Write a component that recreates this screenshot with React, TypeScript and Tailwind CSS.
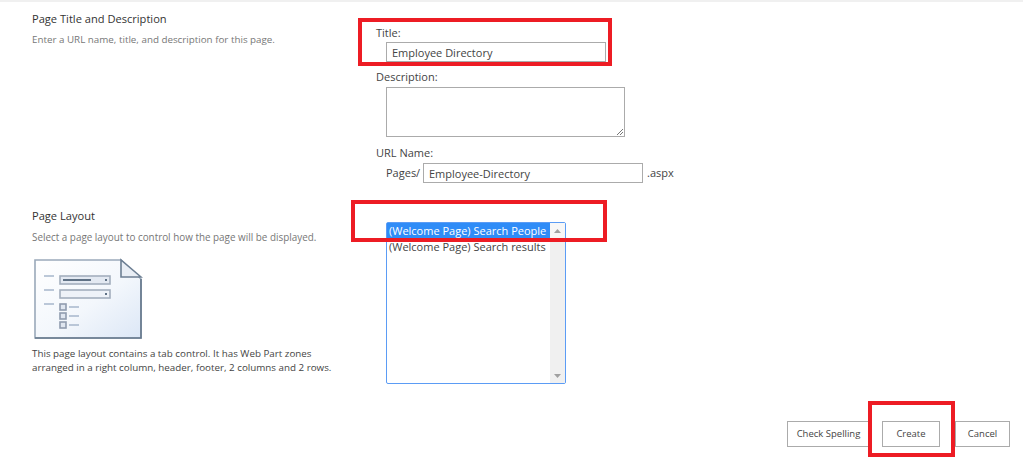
function LayoutPreview() {
  return (
    <svg width="110" height="84" viewBox="0 0 110 84" className="block">
      <defs>
        <linearGradient id="sheet" x1="0" y1="0" x2="1" y2="1">
          <stop offset="0" stopColor="#ffffff" />
          <stop offset="0.55" stopColor="#f3f7fc" />
          <stop offset="1" stopColor="#dce7f6" />
        </linearGradient>
      </defs>
      <path d="M2 2H88L108 21V80H2Z" fill="url(#sheet)" stroke="#9aa9ba" strokeWidth="1.6" />
      <path d="M2 80H108V21" fill="none" stroke="#66788c" strokeWidth="1.6" />
      <path d="M88 2V19H108Z" fill="#e9eef5" stroke="#6d7f93" strokeWidth="1.6" />
      <path d="M11 18H21M11 32H21M11 46H21" stroke="#a6b6cc" strokeWidth="1.6" />
      <rect x="27" y="18" width="50" height="8" fill="#e3e9f2" stroke="#a3aebd" strokeWidth="1.6" />
      <rect x="30" y="21" width="28" height="2" fill="#5f7185" />
      <rect x="27" y="32" width="50" height="8" fill="#eef2f8" stroke="#a3aebd" strokeWidth="1.6" />
      <rect x="72" y="21" width="2" height="2" fill="#5f7185" />
      <rect x="72" y="35" width="2" height="2" fill="#5f7185" />
      <rect x="27" y="46" width="6" height="6" fill="#dfe6f0" stroke="#8f9cae" strokeWidth="1.6" />
      <rect x="27" y="55" width="6" height="6" fill="#dfe6f0" stroke="#8f9cae" strokeWidth="1.6" />
      <rect x="27" y="64" width="6" height="6" fill="#dfe6f0" stroke="#8f9cae" strokeWidth="1.6" />
      <path d="M36 49H46M36 58H46M36 67H46" stroke="#a6b6cc" strokeWidth="1.6" />
    </svg>
  );
}

function Btn({ label, className }: { label: string; className: string }) {
  return (
    <button className={`h-[26px] border border-[#ababab] bg-white text-[9.5px] text-[#444] ${className}`}>
      {label}
    </button>
  );
}

export default function App() {
  return (
    <div
      className="relative h-[465px] w-[1023px] overflow-hidden border-t-2 border-[#f0f0f0] bg-white text-[11px] text-[#444]"
      style={{ fontFamily: '"Open Sans", "Liberation Sans", sans-serif' }}
    >
      <div className="grid grid-cols-[344px_1fr] pl-[32px] pt-[9px]">
        <div>
          <h2 className="text-[11.1px] leading-[16px] text-[#333]">Page Title and Description</h2>
          <p className="mt-[5px] text-[9.8px] leading-[16px] text-[#777]">
            Enter a URL name, title, and description for this page.
          </p>
        </div>
        <div>
          <label className="mt-[14px] block leading-[16px]">Title:</label>
          <input
            readOnly
            value="Employee Directory"
            className="ml-[10px] mt-[1px] block h-[20px] w-[220px] border border-[#ababab] px-[5px] text-[11px] text-[#444] outline-none"
          />
          <label className="mt-[7px] block leading-[16px]">Description:</label>
          <div className="relative ml-[10px] mt-[2px] h-[50px] w-[239px] border border-[#ababab]">
            <svg width="8" height="8" viewBox="0 0 8 8" className="absolute bottom-0 right-0">
              <path d="M1 7L7 1M4 7L7 4" stroke="#777" strokeWidth="1" />
            </svg>
          </div>
          <label className="mt-[8px] block leading-[16px]">URL Name:</label>
          <div className="ml-[10px] mt-[2px] flex items-center">
            <span className="w-[37px]">Pages/</span>
            <input
              readOnly
              value="Employee-Directory"
              className="h-[20px] w-[220px] border border-[#ababab] px-[5px] text-[11px] text-[#444] outline-none"
            />
            <span className="ml-[4px]">.aspx</span>
          </div>
        </div>
      </div>

      <div className="mt-[25px] grid grid-cols-[344px_1fr] pl-[32px]">
        <div>
          <h2 className="text-[11.1px] leading-[16px] text-[#333]">Page Layout</h2>
          <p className="mt-[5px] text-[9.9px] leading-[16px] text-[#777]">
            Select a page layout to control how the page will be displayed.
          </p>
          <div className="ml-[1px] mt-[13px]">
            <LayoutPreview />
          </div>
          <p className="mt-[5px] whitespace-pre-line text-[9.8px] leading-[14px] text-[#444]">
            {"This page layout contains a tab control.  It has Web Part zones\narranged in a right column, header, footer, 2 columns and 2 rows."}
          </p>
        </div>
        <div className="pl-[10px] pt-[14px]">
          <div className="flex h-[162px] w-[180px] rounded-[2px] border border-[#5b9cf5]">
            <div className="min-w-0 flex-1 text-[11px] leading-[16px]">
              <div className="whitespace-nowrap bg-[#2f8cf7] pl-[2px] text-white">(Welcome Page) Search People</div>
              <div className="whitespace-nowrap pl-[2px]">(Welcome Page) Search results</div>
            </div>
            <div className="flex w-[15px] flex-col items-center justify-between bg-[#f0f0f0]">
              <div className="flex h-[15px] w-full items-center justify-center bg-[#f7f7f7]">
                <svg width="7" height="4" viewBox="0 0 7 4"><path d="M3.5 0L7 4H0Z" fill="#a0a0a0" /></svg>
              </div>
              <div className="flex h-[15px] w-full items-center justify-center">
                <svg width="7" height="4" viewBox="0 0 7 4"><path d="M0 0H7L3.5 4Z" fill="#a0a0a0" /></svg>
              </div>
            </div>
          </div>
        </div>
      </div>

      <div className="mt-[37px] flex justify-end pr-[13px]">
        <Btn label="Check Spelling" className="w-[83px]" />
        <Btn label="Create" className="ml-[12px] w-[58px]" />
        <Btn label="Cancel" className="ml-[15px] w-[55px]" />
      </div>

      <div className="pointer-events-none absolute left-[358px] top-[16px] h-[48px] w-[254px] border-[4px] border-[#ed1c24]" />
      <div className="pointer-events-none absolute left-[351px] top-[198px] h-[42px] w-[256px] border-[4px] border-[#ed1c24]" />
      <div className="pointer-events-none absolute left-[868px] top-[399px] h-[56px] w-[87px] border-[4px] border-[#ed1c24]" />
    </div>
  );
}
